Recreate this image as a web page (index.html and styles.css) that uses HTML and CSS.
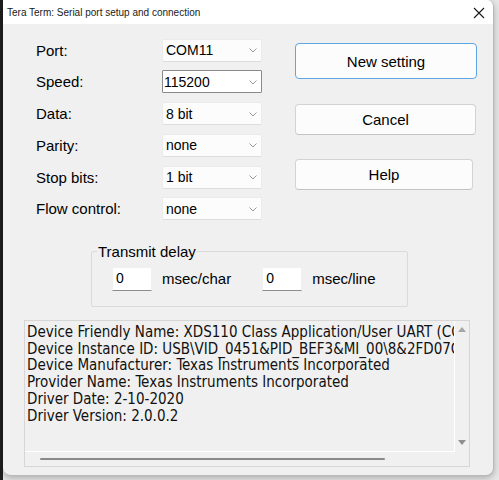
FILE: index.html
```html
<!DOCTYPE html>
<html>
<head>
<meta charset="utf-8">
<link rel="stylesheet" href="styles.css">
</head>
<body>
<div class="window">
  <div class="titlebar">
    <span class="title">Tera Term: Serial port setup and connection</span>
    <svg class="close" width="12" height="12" viewBox="0 0 12 12"><path d="M1 1 L11 11 M11 1 L1 11" stroke="#1a1a1a" stroke-width="1.1" fill="none"/></svg>
  </div>
  <div class="body">
    <div class="top">
      <div class="form">
        <label class="lbl">Port:</label>
        <div class="select"><span>COM11</span><svg class="chev" width="8" height="5" viewBox="0 0 8 5"><polyline points="0.5,0.5 4,4 7.5,0.5" fill="none" stroke="#9a9a9a" stroke-width="1"/></svg></div>
        <label class="lbl">Speed:</label>
        <div class="select focus"><span>115200</span><svg class="chev" width="8" height="5" viewBox="0 0 8 5"><polyline points="0.5,0.5 4,4 7.5,0.5" fill="none" stroke="#9a9a9a" stroke-width="1"/></svg></div>
        <label class="lbl">Data:</label>
        <div class="select"><span>8 bit</span><svg class="chev" width="8" height="5" viewBox="0 0 8 5"><polyline points="0.5,0.5 4,4 7.5,0.5" fill="none" stroke="#9a9a9a" stroke-width="1"/></svg></div>
        <label class="lbl">Parity:</label>
        <div class="select"><span>none</span><svg class="chev" width="8" height="5" viewBox="0 0 8 5"><polyline points="0.5,0.5 4,4 7.5,0.5" fill="none" stroke="#9a9a9a" stroke-width="1"/></svg></div>
        <label class="lbl">Stop bits:</label>
        <div class="select"><span>1 bit</span><svg class="chev" width="8" height="5" viewBox="0 0 8 5"><polyline points="0.5,0.5 4,4 7.5,0.5" fill="none" stroke="#9a9a9a" stroke-width="1"/></svg></div>
        <label class="lbl">Flow control:</label>
        <div class="select"><span>none</span><svg class="chev" width="8" height="5" viewBox="0 0 8 5"><polyline points="0.5,0.5 4,4 7.5,0.5" fill="none" stroke="#9a9a9a" stroke-width="1"/></svg></div>
      </div>
      <div class="buttons">
        <div class="btn primary">New setting</div>
        <div class="btn cancel">Cancel</div>
        <div class="btn help">Help</div>
      </div>
    </div>
    <fieldset class="group">
      <legend>Transmit delay</legend>
      <div class="delays">
        <div class="field">0</div>
        <span class="unit">msec/char</span>
        <div class="field second">0</div>
        <span class="unit">msec/line</span>
      </div>
    </fieldset>
    <div class="info">
      <div class="info-text">
        <div>Device Friendly Name: XDS110 Class Application/User UART (COM11)</div>
        <div>Device Instance ID: USB\VID_0451&amp;PID_BEF3&amp;MI_00\8&amp;2FD07C9&amp;0&amp;0000</div>
        <div>Device Manufacturer: Texas Instruments Incorporated</div>
        <div>Provider Name: Texas Instruments Incorporated</div>
        <div>Driver Date: 2-10-2020</div>
        <div>Driver Version: 2.0.0.2</div>
      </div>
      <div class="vscroll">
        <svg width="8" height="5" viewBox="0 0 8 5"><polygon points="0,5 4,0 8,5" fill="#a6a6a6"/></svg>
        <svg width="8" height="5" viewBox="0 0 8 5"><polygon points="0,0 4,5 8,0" fill="#8f8f8f"/></svg>
      </div>
      <div class="hscroll"><div class="thumb"></div></div>
      <div class="corner"></div>
    </div>
  </div>
</div>
</body>
</html>
```

FILE: styles.css
```css
html, body {
  margin: 0;
  padding: 0;
}
body {
  width: 499px;
  height: 480px;
  overflow: hidden;
  background: linear-gradient(to right, #1e1e1e 0, #1e1e1e 3px, #e6e6e6 3px);
  font-family: "Liberation Sans", Arial, sans-serif;
  color: #000;
}
.window {
  margin-left: 3px;
  width: 491px;
  height: 476px;
  box-sizing: border-box;
  border: 1px solid #b9b9b9;
  border-top: none;
  border-left: none;
  border-radius: 0 7px 8px 8px;
  background: #f0f0f0;
  overflow: hidden;
  display: flex;
  flex-direction: column;
  box-shadow: 0 2px 6px rgba(0,0,0,0.25);
}
.titlebar {
  height: 24px;
  flex: none;
  background: #ffffff;
  display: flex;
  align-items: center;
  justify-content: space-between;
  padding: 0 8px 0 4px;
}
.title {
  font-family: "Liberation Sans", Arial, sans-serif;
  font-size: 10px;
  color: #1a1a1a;
  margin-top: 1px;
}
.close {
  margin-top: 1px;
}
.body {
  flex: 1;
  display: flex;
  flex-direction: column;
  padding-top: 14px;
}
.top {
  display: flex;
}
.form {
  margin-left: 33px;
  display: grid;
  grid-template-columns: 126px 100px;
  grid-auto-rows: 24px;
  row-gap: 7.8px;
  align-items: center;
}
.lbl {
  font-size: 15px;
  color: #000;
}
.select {
  height: 23px;
  box-sizing: border-box;
  background: #fcfcfc;
  border: 1px solid #ebebeb;
  border-bottom-color: #dcdcdc;
  border-radius: 2px;
  display: flex;
  align-items: center;
  justify-content: space-between;
  padding: 0 4px 0 3px;
  font-size: 14px;
}
.select.focus {
  background: #ffffff;
  border: 1px solid #8a8a8a;
  border-radius: 1px;
  padding-left: 1px;
}
.chev {
  margin-top: 1px;
}
.buttons {
  margin-left: 33px;
  padding-top: 5px;
  display: flex;
  flex-direction: column;
}
.btn {
  box-sizing: border-box;
  background: #fcfcfc;
  border: 1px solid #d3d3d3;
  border-bottom-color: #c4c4c4;
  border-radius: 4px;
  display: flex;
  align-items: center;
  justify-content: center;
  font-size: 15px;
  color: #000;
}
.btn.primary {
  width: 182px;
  height: 36px;
  border: 1.5px solid #5fa6e3;
}
.btn.cancel {
  width: 181px;
  height: 31px;
  margin-top: 25px;
}
.btn.help {
  width: 178px;
  height: 31px;
  margin-top: 24px;
}
.group {
  margin: 22px 0 0 88px;
  width: 317px;
  box-sizing: border-box;
  border: 1px solid #dadada;
  border-radius: 2px;
  padding: 7px 0 15px 0;
}
.group legend {
  font-size: 15px;
  line-height: 17px;
  padding: 0 1px;
  margin-left: 5px;
  color: #000;
}
.delays {
  display: flex;
  align-items: center;
  margin-left: 20px;
}
.field {
  width: 40px;
  height: 24px;
  box-sizing: border-box;
  background: #ffffff;
  border: 1px solid #f0f0f0;
  border-bottom: 1px solid #8c8c8c;
  font-size: 14px;
  padding: 2px 0 0 3px;
}
.field.second {
  margin-left: 31px;
}
.unit {
  font-size: 15px;
  margin-left: 10px;
}
.info {
  margin: 13px 0 0 21px;
  width: 446px;
  height: 147px;
  box-sizing: border-box;
  border: 1px solid #d6d6d6;
  display: grid;
  grid-template-columns: 1fr 14px;
  grid-template-rows: 1fr 14px;
  background: #f0f0f0;
}
.info-text {
  overflow: hidden;
  white-space: nowrap;
  font-family: "DejaVu Sans Condensed", "DejaVu Sans", sans-serif;
  font-size: 15px;
  line-height: 16.7px;
  color: #111;
  padding: 3px 0 0 2px;
  border-right: 1px solid #ffffff;
  border-bottom: 1px solid #ffffff;
}
.vscroll {
  display: flex;
  flex-direction: column;
  justify-content: space-between;
  align-items: center;
  padding: 6px 0 7px 0;
}
.hscroll {
  display: flex;
  align-items: center;
}
.thumb {
  margin-left: 15px;
  width: 345px;
  height: 2px;
  border-radius: 1px;
  background: #8a8a8a;
}
.corner {
  background: #f0f0f0;
}
```
